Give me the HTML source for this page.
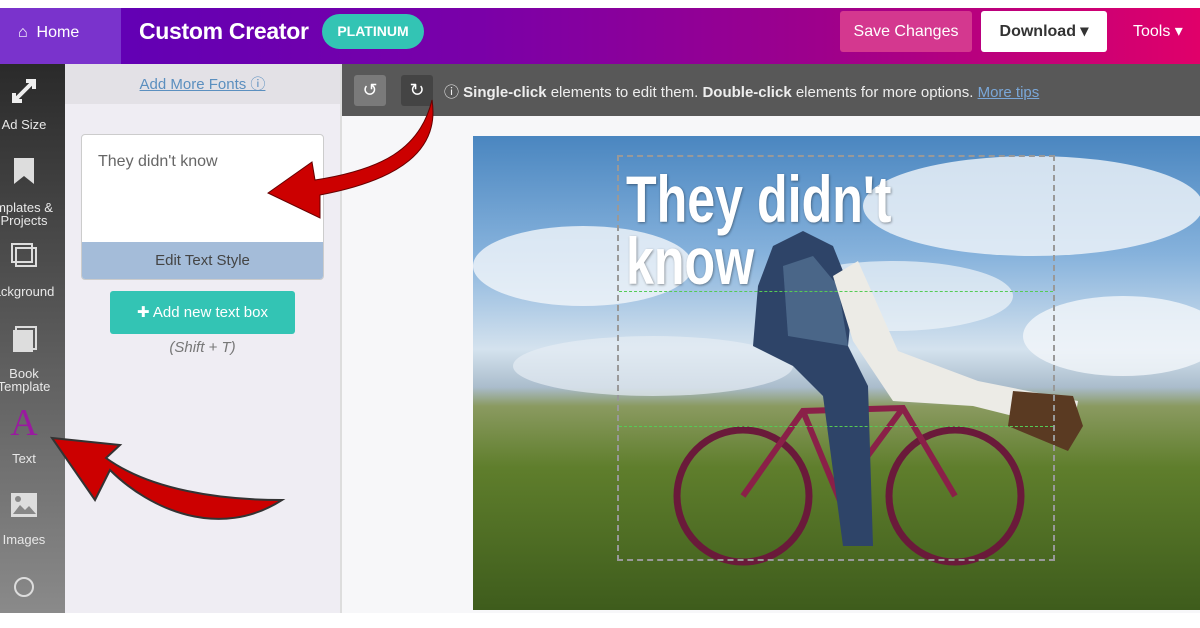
<!DOCTYPE html>
<html><head><meta charset="utf-8"><style>
*{margin:0;padding:0;box-sizing:border-box}
body{width:1200px;height:628px;background:#fff;font-family:"Liberation Sans",sans-serif;position:relative;overflow:hidden}
.hdr{position:absolute;top:8px;left:0;width:1200px;height:56px;background:linear-gradient(90deg,#5a00b8 0%,#7a00a8 40%,#a0008a 70%,#e0006a 100%)}
.home{position:absolute;left:0;top:0;width:121px;height:56px;background:#7a33cc;color:#fff;font-size:16px;line-height:50px;padding-left:18px}
.title{position:absolute;left:139px;top:10px;color:#fff;font-size:23px;font-weight:bold;letter-spacing:-.3px}
.plat{position:absolute;left:322px;top:6px;width:102px;height:35px;border-radius:18px;background:#33c4b4;color:#fff;font-weight:bold;font-size:14px;text-align:center;line-height:35px}
.save{position:absolute;left:840px;top:3px;width:132px;height:41px;background:#d4388f;color:#fff;font-size:16px;text-align:center;line-height:41px;border-radius:3px}
.dl{position:absolute;left:981px;top:3px;width:126px;height:41px;background:#fff;color:#333;font-weight:bold;font-size:16px;text-align:center;line-height:41px;border-radius:3px}
.tools{position:absolute;left:1133px;top:0;color:#fff;font-size:16px;line-height:48px}
.side{position:absolute;left:0;top:64px;width:65px;height:549px;background:linear-gradient(#2a2a2a,#8a8a8a);overflow:hidden}
.si{position:absolute;left:0;width:48px;text-align:center;color:#e8e8e8;font-size:13px;line-height:13px;white-space:nowrap;display:flex;justify-content:center}
.panel{position:absolute;left:65px;top:64px;width:277px;height:549px;background:#efedf3;border-right:2px solid #ddd}
.pan-top{height:40px;background:#e3e1e6;text-align:center;line-height:42px;color:#5b8fbf;font-size:15px;text-decoration:underline}
.tb{position:absolute;left:81px;top:134px;width:243px;height:146px;background:#fff;border:1px solid #ccc;border-radius:4px;overflow:hidden}
.tb .t{padding:18px 16px;color:#666;font-size:16px}
.tb .s{position:absolute;bottom:0;left:0;width:100%;height:37px;background:#a4bcd9;text-align:center;line-height:37px;color:#444;font-size:15px}
.add{position:absolute;left:110px;top:291px;width:185px;height:43px;background:#33c4b4;color:#fff;font-size:15px;text-align:center;line-height:43px;border-radius:3px}
.shift{position:absolute;left:110px;top:339px;width:185px;text-align:center;color:#777;font-style:italic;font-size:15px}
.bar{position:absolute;left:342px;top:64px;width:858px;height:52px;background:#585858;color:#eee;font-size:15px}
.bar .b{position:absolute;top:11px;width:32px;height:31px;border-radius:3px;color:#fff;text-align:center;line-height:31px;font-size:18px}
.canvasbg{position:absolute;left:342px;top:116px;width:858px;height:497px;background:#f7f7f9}
.photo{position:absolute;left:473px;top:136px;width:727px;height:474px;background:linear-gradient(#4a86c0 0%,#86b2dc 25%,#d4e2ee 45%,#aabccc 53%,#8a9a60 57%,#5f7e2c 70%,#3e5c1c 100%)}
.big{position:absolute;left:626px;top:168px;color:#fff;font-size:66px;line-height:62px;font-weight:bold;font-family:"Liberation Sans Narrow","Liberation Sans",sans-serif;transform:scaleX(.76);transform-origin:left;text-shadow:1px 1px 3px rgba(0,0,0,.4)}
.sel{position:absolute;left:617px;top:155px;width:438px;height:406px;border:2px dashed #999}
</style></head><body>
<div class="hdr">
<div class="home">⌂&nbsp; Home</div>
<div class="title">Custom Creator</div>
<div class="plat">PLATINUM</div>
<div class="save">Save Changes</div>
<div class="dl">Download ▾</div>
<div class="tools">Tools ▾</div>
</div>
<div class="side">
<div class="si" style="top:12px"><svg width="30" height="30"><path d="M5 25L25 5M17 5h8v8M5 17v8h8" stroke="#eee" stroke-width="4" fill="none"/></svg></div>
<div class="si" style="top:54px">Ad Size</div>
<div class="si" style="top:94px"><svg width="20" height="26"><path d="M0 0h20v26l-10-8-10 8z" fill="#ddd"/></svg></div>
<div class="si" style="top:137px">mplates &amp;</div>
<div class="si" style="top:150px">Projects</div>
<div class="si" style="top:178px"><svg width="28" height="26"><rect x="2" y="2" width="20" height="18" fill="none" stroke="#ddd" stroke-width="2"/><rect x="6" y="6" width="20" height="18" fill="none" stroke="#ddd" stroke-width="2"/></svg></div>
<div class="si" style="top:221px">ackground</div>
<div class="si" style="top:262px"><svg width="26" height="28"><rect x="2" y="4" width="20" height="22" fill="#ddd"/><rect x="5" y="1" width="20" height="22" fill="none" stroke="#ddd" stroke-width="2"/></svg></div>
<div class="si" style="top:303px">Book</div>
<div class="si" style="top:316px">Template</div>
<div class="si" style="top:340px;font-family:'Liberation Serif',serif;font-size:38px;line-height:38px;color:#9a1aa0">A</div>
<div class="si" style="top:388px">Text</div>
<div class="si" style="top:428px"><svg width="28" height="26"><rect x="1" y="1" width="26" height="24" fill="#ddd"/><path d="M3 22l7-9 5 5 4-4 7 8z" fill="#888"/><circle cx="8" cy="7" r="3" fill="#888"/></svg></div>
<div class="si" style="top:469px">Images</div>
<div class="si" style="top:512px"><svg width="22" height="22"><circle cx="11" cy="11" r="9" fill="none" stroke="#ddd" stroke-width="2"/></svg></div>
</div>
<div class="panel"><div class="pan-top">Add More Fonts ⓘ</div></div>
<div class="tb"><div class="t">They didn't know</div><div class="s">Edit Text Style</div></div>
<div class="add">✚ Add new text box</div>
<div class="shift">(Shift + T)</div>
<div class="bar">
<div class="b" style="left:12px;background:#7a7a7a">↺</div>
<div class="b" style="left:59px;background:#444">↻</div>
<div style="position:absolute;left:102px;top:17px">ⓘ <b>Single-click</b> elements to edit them. <b>Double-click</b> elements for more options. <span style="color:#7aa7d8;text-decoration:underline">More tips</span></div>
</div>
<div class="canvasbg"></div>
<div class="photo"></div>
<svg style="position:absolute;left:473px;top:136px" width="727" height="474">
<ellipse cx="110" cy="130" rx="110" ry="40" fill="#f2f6fa" opacity=".8"/>
<ellipse cx="560" cy="70" rx="170" ry="50" fill="#f2f6fa" opacity=".8"/>
<ellipse cx="420" cy="160" rx="120" ry="35" fill="#eef3f8" opacity=".7"/>
<ellipse cx="650" cy="200" rx="100" ry="40" fill="#f2f6fa" opacity=".8"/>
<ellipse cx="180" cy="230" rx="140" ry="30" fill="#e6edf3" opacity=".7"/>
<circle cx="270" cy="360" r="66" fill="none" stroke="#6a1a3a" stroke-width="7"/>
<circle cx="482" cy="360" r="66" fill="none" stroke="#6a1a3a" stroke-width="7"/>
<path d="M270 360L330 275L430 272L482 360M330 275L365 360L430 272" stroke="#8a2048" stroke-width="6" fill="none"/>
<path d="M300 110l30-15 30 15 20 50 -5 50 20 40 5 160 -30 0 -20-150 -30-30 -40-20 5-60z" fill="#2e4468"/>
<path d="M310 130l30-10 25 30 10 60 -60 -10z" fill="#4a6688"/>
<path d="M360 140l25-15 40 90 80 30 100 20 -5 30 -100-25 -80-5 -40-60z" fill="#ecebe6"/>
<path d="M540 255l60 5 10 30 -15 25 -60-25z" fill="#5a3a22"/>
</svg>
<div class="big">They didn't<br>know</div>
<div class="sel"></div>
<div style="position:absolute;left:619px;top:291px;width:434px;border-top:1px dashed #5c5"></div>
<div style="position:absolute;left:619px;top:426px;width:434px;border-top:1px dashed #5c5"></div>
<svg style="position:absolute;left:0;top:0" width="1200" height="628">
<path d="M432 100C440 150 400 180 320 195L320 218L268 193L312 162L315 180C380 170 420 150 432 100Z" fill="#cc0000" stroke="#600" stroke-width="1"/>
<path d="M282 500C220 540 150 510 110 470L95 500L52 438L120 445L106 458C150 490 220 500 282 500Z" fill="#cc0000" stroke="#333" stroke-width="2"/>
</svg>
</body></html>
